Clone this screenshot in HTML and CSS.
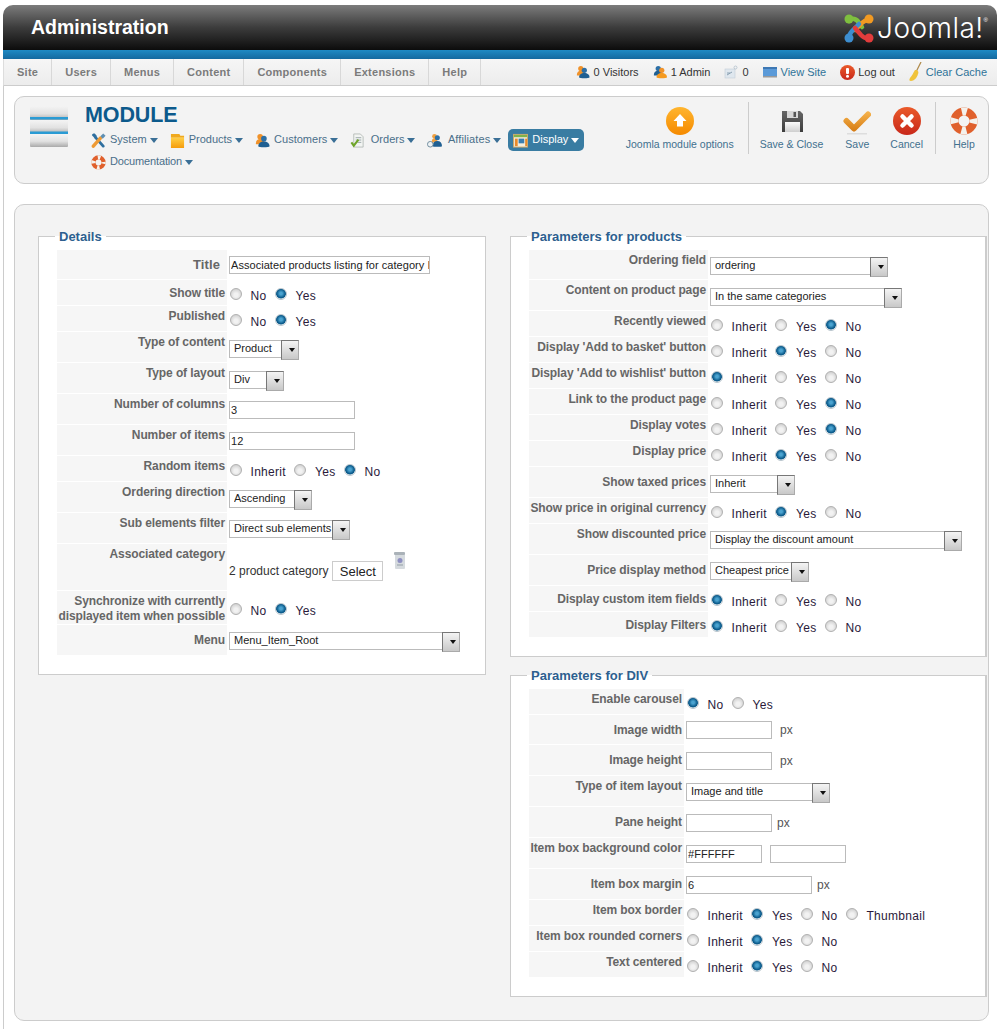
FILE: index.html
```html
<!DOCTYPE html>
<html lang="en">
<head>
<meta charset="utf-8">
<title>Administration</title>
<link rel="stylesheet" href="styles.css">
</head>
<body>
<svg class="sprite" xmlns="http://www.w3.org/2000/svg">
  <defs>
    <linearGradient id="gOrange" x1="0" y1="0" x2="0" y2="1"><stop offset="0" stop-color="#ffb52e"/><stop offset="1" stop-color="#f58a00"/></linearGradient>
    <linearGradient id="gRed" x1="0" y1="0" x2="0" y2="1"><stop offset="0" stop-color="#ea5a2a"/><stop offset="1" stop-color="#c8281a"/></linearGradient>
    <linearGradient id="gBar" x1="0" y1="0" x2="0" y2="1"><stop offset="0" stop-color="#f4f4f4"/><stop offset=".55" stop-color="#e2e2e2"/><stop offset="1" stop-color="#aaa"/></linearGradient>
    <linearGradient id="gCheck" gradientUnits="userSpaceOnUse" x1="0" y1="6" x2="0" y2="24"><stop offset="0" stop-color="#f4b04a"/><stop offset="1" stop-color="#d67c14"/></linearGradient>
    <linearGradient id="gDisk" x1="0" y1="0" x2="0" y2="1"><stop offset="0" stop-color="#666"/><stop offset="1" stop-color="#3c3c3c"/></linearGradient>
    <linearGradient id="gDiskLabel" x1="0" y1="0" x2="0" y2="1"><stop offset="0" stop-color="#fafafa"/><stop offset="1" stop-color="#cfcfcf"/></linearGradient>
    <linearGradient id="gFolder" x1="0" y1="0" x2="0" y2="1"><stop offset="0" stop-color="#ffcf45"/><stop offset="1" stop-color="#f59c0c"/></linearGradient>
    <symbol id="i-people-a" viewBox="0 0 16 16">
      <circle cx="5.500" cy="4" r="3" fill="#f0922a"/><path d="M1 11c0-3 2-4.500 4.500-4.500S10 8 10 11v1H1z" fill="#f0922a"/>
      <circle cx="9.500" cy="6" r="3" fill="#2c6fa6"/><path d="M3.500 14c0-3 2.500-5 6-5s6 2 6 5c0 1.500-12 1.500-12 0z" fill="#1f5f92"/>
    </symbol>
    <symbol id="i-people-b" viewBox="0 0 16 16">
      <circle cx="6" cy="4" r="3" fill="#2c6fa6"/><path d="M1 11c0-3 2-4.500 5-4.500s5 1.500 5 4.500v1H1z" fill="#1f5f92"/>
      <circle cx="10" cy="6" r="3" fill="#f0922a"/><path d="M4 14c0-3 2.500-5 6-5s6 2 6 5c0 1.500-12 1.500-12 0z" fill="#f59a20"/>
    </symbol>
    <symbol id="i-aff" viewBox="0 0 16 16">
      <circle cx="8" cy="3.500" r="2.500" fill="#f0a040"/><path d="M5 10c0-3 1-4.500 3-4.500s3 1.500 3 4.500z" fill="#f0a040"/>
      <circle cx="11" cy="5" r="2.700" fill="#2c6fa6"/><path d="M6 14c0-3.500 2-5.500 5-5.500s5 2 5 5.500c0 1-10 1-10 0z" fill="#1f5f92"/>
      <circle cx="3.500" cy="12" r="3" fill="#eef2f4" stroke="#6d8a9c"/>
    </symbol>
    <symbol id="i-tools" viewBox="0 0 16 16">
      <path d="M13 14 5 5" stroke="#2f6f9f" stroke-width="3" stroke-linecap="round"/>
      <path d="M1 2.500 4 5.500 6.500 3.500 4 .5C2 .5 1 1 1 2.500z" fill="#2f6f9f"/>
      <path d="M2.500 14 10 5.500" stroke="#ee9a34" stroke-width="3.600" stroke-linecap="round"/>
      <path d="M10 3.500 13 .5 15.500 3 12.500 6z" fill="#5f8fb2"/>
    </symbol>
    <symbol id="i-box" viewBox="0 0 16 16">
      <path d="M1 1h9l1 2h4v2H1z" fill="#f0a91e"/><rect x="1" y="5" width="14" height="11" fill="url(#gFolder)"/>
    </symbol>
    <symbol id="i-doc" viewBox="0 0 16 16">
      <path d="M4 1h7l3 3v11H4z" fill="#f2f4f2" stroke="#a9b0ac" stroke-width=".8"/>
      <path d="M6 5h6M6 7.500h6M8 10h4" stroke="#9aa5a9"/>
      <path d="M1.500 10 4 13.500 9 7" fill="none" stroke="#6fa52a" stroke-width="2.200"/>
    </symbol>
    <symbol id="i-display" viewBox="0 0 16 16">
      <rect x=".5" y="1.500" width="15" height="13.500" fill="#f4eedd" stroke="#cda86a"/>
      <rect x="1" y="2" width="14" height="2.500" fill="#7fb34a"/>
      <rect x="2" y="6" width="3" height="8" fill="#e88a2a"/>
      <rect x="6" y="6" width="6" height="5" fill="#3a7eb0"/>
      <rect x="13" y="6" width="2" height="8" fill="#e88a2a"/>
    </symbol>
    <symbol id="i-buoy" viewBox="0 0 28 28">
      <circle cx="14" cy="14" r="9.500" fill="none" stroke="#e0602c" stroke-width="8"/>
      <circle cx="14" cy="14" r="9.500" fill="none" stroke="#f4f1ec" stroke-width="8" stroke-dasharray="5 9.920" stroke-dashoffset="2.500"/>
    </symbol>
    <symbol id="i-msg" viewBox="0 0 14 14">
      <rect x="1" y="4" width="10" height="9" fill="#dfe7ee" stroke="#c3ced7" stroke-width=".6"/>
      <path d="M3 10 8 7M3 8h3" stroke="#8aa0b2"/>
      <circle cx="11.500" cy="2.500" r="1.500" fill="none" stroke="#a9b9c6" stroke-width=".7"/>
    </symbol>
    <symbol id="i-trash" viewBox="0 0 13 19">
      <rect x="2" y="3" width="10" height="15" rx="1" fill="#d5dade"/>
      <rect x="1" y="1" width="11" height="3" rx="1" fill="#aab2b8"/>
      <circle cx="7" cy="9.500" r="2.500" fill="#8d8fc0"/><path d="M4 14h6" stroke="#b4bcc2" stroke-width="2"/>
    </symbol>
  </defs>
</svg>

<div class="page">
  <header class="top">
    <h1 class="brand">Administration</h1>
    <div class="jlogo">
      <svg class="jmark" viewBox="0 0 30 30" width="30" height="30">
        <path d="M5 8c3-4 8-2 10 2l3 4" fill="none" stroke="#7fbf3f" stroke-width="4.500" stroke-linecap="round"/>
        <path d="M24 7c-4 0-6 3-9 6l-4 4" fill="none" stroke="#f29a22" stroke-width="4.500" stroke-linecap="round"/>
        <path d="M5 25c0-4 2-6 5-9l5-5" fill="none" stroke="#3d8ed0" stroke-width="4.500" stroke-linecap="round"/>
        <path d="M25 25c-3 1-5 0-8-3l-6-7" fill="none" stroke="#e23c3c" stroke-width="4.500" stroke-linecap="round"/>
        <circle cx="5" cy="6" r="4.500" fill="#7fbf3f"/><circle cx="25" cy="6" r="4.500" fill="#f29a22"/>
        <circle cx="5" cy="25" r="4.500" fill="#3d8ed0"/><circle cx="25" cy="25" r="4.500" fill="#e23c3c"/>
      </svg>
      <span class="jtext">Joomla!</span><span class="jreg">®</span>
    </div>
  </header>
  <div class="blue"></div>
  <nav class="tabs">
    <ul class="tablist">
      <li><a class="tab" href="#">Site</a></li>
      <li><a class="tab" href="#">Users</a></li>
      <li><a class="tab" href="#">Menus</a></li>
      <li><a class="tab" href="#">Content</a></li>
      <li><a class="tab" href="#">Components</a></li>
      <li><a class="tab" href="#">Extensions</a></li>
      <li><a class="tab" href="#">Help</a></li>
    </ul>
    <div class="status">
      <span class="st"><svg class="i14"><use href="#i-people-a"/></svg>0 Visitors</span>
      <span class="st"><svg class="i14"><use href="#i-people-b"/></svg>1 Admin</span>
      <span class="st"><svg class="i14"><use href="#i-msg"/></svg>0</span>
      <a class="st link" href="#"><svg class="i14" viewBox="0 0 14 14"><rect y="2" width="14" height="10" fill="#5b9ad8"/><rect y="2" width="14" height="2" fill="#3e78b4"/><rect y="11" width="14" height="1.500" fill="#9a9a9a"/></svg>View Site</a>
      <a class="st dark" href="#"><svg class="i15" viewBox="0 0 15 15"><circle cx="7.500" cy="7.500" r="7.500" fill="url(#gRed)"/><rect x="6" y="3" width="3" height="6" rx="1" fill="#fff"/><circle cx="7.500" cy="11.200" r="1.500" fill="#fff"/></svg>Log out</a>
      <a class="st link" href="#"><svg class="broom" viewBox="0 0 13 20"><path d="M12 0 7 10" stroke="#b08a4a" stroke-width="1.200"/><path d="M6 8c3 0 4 2 3 4-1 4-4 7-7 7-2 0-2-1-1-3 2-2 3-5 5-8z" fill="#f0c33a"/></svg>Clear Cache</a>
    </div>
  </nav>

  <main class="main">
    <section class="panel toolbar">
      <svg class="modicon" viewBox="0 0 38 42" width="38" height="42">
        <rect y="1" width="38" height="14" rx="1" fill="url(#gBar)"/>
        <rect y="15" width="38" height="14" rx="1" fill="url(#gBar)"/>
        <rect y="29" width="38" height="13" rx="1" fill="url(#gBar)"/>
        <rect y="12" width="38" height="2.500" fill="#2a9bd4"/>
        <rect y="26.500" width="38" height="2.500" fill="#2a9bd4"/>
      </svg>
      <div class="heading">
        <h2 class="modtitle">MODULE</h2>
        <ul class="modnav">
          <li class="mi"><svg class="i15"><use href="#i-tools"/></svg><span>System</span><i class="caret"></i></li>
          <li class="mi"><svg class="i15"><use href="#i-box"/></svg><span>Products</span><i class="caret"></i></li>
          <li class="mi"><svg class="i15"><use href="#i-people-a"/></svg><span>Customers</span><i class="caret"></i></li>
          <li class="mi wide"><svg class="i15"><use href="#i-doc"/></svg><span>Orders</span><i class="caret"></i></li>
          <li class="mi wide"><svg class="i15"><use href="#i-aff"/></svg><span class="spread">Affiliates</span><i class="caret"></i></li>
          <li class="mi active"><svg class="i15"><use href="#i-display"/></svg><span>Display</span><i class="caret"></i></li>
          <li class="mi"><svg class="i15"><use href="#i-buoy"/></svg><span class="tight">Documentation</span><i class="caret"></i></li>
        </ul>
      </div>
      <div class="tools">
        <div class="tgroup g1">
          <a class="tool" href="#"><svg class="i28" viewBox="0 0 28 28"><circle cx="14" cy="14" r="14" fill="url(#gOrange)"/><path d="M14 7 20.500 14H17v5.500h-6V14H7.500z" fill="#fff"/></svg>Joomla module options</a>
        </div>
        <div class="tgroup g2">
          <a class="tool mr1" href="#"><svg class="i28" viewBox="0 0 28 28"><path d="M4 4h18l3 3v18H4z" fill="url(#gDisk)"/><rect x="9" y="4" width="11" height="7" fill="#d6d6d6"/><rect x="15.500" y="5" width="2.500" height="5" fill="#555"/><rect x="7" y="15" width="15" height="10" fill="url(#gDiskLabel)"/></svg>Save &amp; Close</a>
          <a class="tool" href="#"><svg class="i28" viewBox="0 0 28 28"><path d="M3.500 14 11 21.500 25 7.500" fill="none" stroke="url(#gCheck)" stroke-width="6" stroke-linecap="round" stroke-linejoin="round"/><rect x="4" y="26" width="20" height="1.500" fill="#ddd"/></svg>Save</a>
          <a class="tool" href="#"><svg class="i28" viewBox="0 0 28 28"><circle cx="14" cy="14" r="14" fill="url(#gRed)"/><path d="M9.500 9.500 18.500 18.500M18.500 9.500 9.500 18.500" stroke="#fff" stroke-width="4.500" stroke-linecap="round"/></svg>Cancel</a>
        </div>
        <div class="tgroup g3">
          <a class="tool" href="#"><svg class="i28"><use href="#i-buoy"/></svg>Help</a>
        </div>
      </div>
    </section>

    <section class="panel content">
      <fieldset class="fs">
        <legend>Details</legend>
        <div class="rows c170">
          <div class="row h29 mid"><label class="lbl big">Title</label><div class="fld t6"><input class="txt w201" type="text" value="Associated products listing for category ID"></div></div>
          <div class="row h25 mid"><label class="lbl">Show title</label><div class="fld rad"><label class="opt"><input type="radio" name="a1">No</label><label class="opt"><input type="radio" name="a1" checked>Yes</label></div></div>
          <div class="row h25"><label class="lbl">Published</label><div class="fld rad"><label class="opt"><input type="radio" name="a2">No</label><label class="opt"><input type="radio" name="a2" checked>Yes</label></div></div>
          <div class="row h30"><label class="lbl">Type of content</label><div class="fld t8"><span class="sel w70"><select><option>Product</option></select></span></div></div>
          <div class="row h30"><label class="lbl">Type of layout</label><div class="fld t8"><span class="sel w55"><select><option>Div</option></select></span></div></div>
          <div class="row h30"><label class="lbl">Number of columns</label><div class="fld"><input class="txt w126" type="text" value="3"></div></div>
          <div class="row h30"><label class="lbl">Number of items</label><div class="fld"><input class="txt w126" type="text" value="12"></div></div>
          <div class="row h25"><label class="lbl">Random items</label><div class="fld rad"><label class="opt"><input type="radio" name="a3">Inherit</label><label class="opt"><input type="radio" name="a3">Yes</label><label class="opt"><input type="radio" name="a3" checked>No</label></div></div>
          <div class="row h30"><label class="lbl">Ordering direction</label><div class="fld t8"><span class="sel w83"><select><option>Ascending</option></select></span></div></div>
          <div class="row h30"><label class="lbl">Sub elements filter</label><div class="fld"><span class="sel w121"><select><option>Direct sub elements</option></select></span></div></div>
          <div class="row h46"><label class="lbl">Associated category</label>
            <div class="fld assoc"><span class="assoc-text">2 product category</span><button class="btn" type="button">Select</button><svg class="trash"><use href="#i-trash"/></svg></div></div>
          <div class="row h33 mid"><label class="lbl">Synchronize with currently<br>displayed item when possible</label><div class="fld rad t13"><label class="opt"><input type="radio" name="a4">No</label><label class="opt"><input type="radio" name="a4" checked>Yes</label></div></div>
          <div class="row h30 mid"><label class="lbl">Menu</label><div class="fld"><span class="sel w231"><select><option>Menu_Item_Root</option></select></span></div></div>
        </div>
      </fieldset>

      <div class="rightcol">
        <fieldset class="fs">
          <legend>Parameters for products</legend>
          <div class="rows c179">
            <div class="row h29"><label class="lbl">Ordering field</label><div class="fld"><span class="sel w178"><select><option>ordering</option></select></span></div></div>
            <div class="row h30"><label class="lbl">Content on product page</label><div class="fld t8"><span class="sel w192"><select><option>In the same categories</option></select></span></div></div>
            <div class="row h25"><label class="lbl">Recently viewed</label><div class="fld rad"><label class="opt"><input type="radio" name="b1">Inherit</label><label class="opt"><input type="radio" name="b1">Yes</label><label class="opt"><input type="radio" name="b1" checked>No</label></div></div>
            <div class="row h25"><label class="lbl">Display 'Add to basket' button</label><div class="fld rad"><label class="opt"><input type="radio" name="b2">Inherit</label><label class="opt"><input type="radio" name="b2" checked>Yes</label><label class="opt"><input type="radio" name="b2">No</label></div></div>
            <div class="row h25"><label class="lbl">Display 'Add to wishlist' button</label><div class="fld rad"><label class="opt"><input type="radio" name="b3" checked>Inherit</label><label class="opt"><input type="radio" name="b3">Yes</label><label class="opt"><input type="radio" name="b3">No</label></div></div>
            <div class="row h25"><label class="lbl">Link to the product page</label><div class="fld rad"><label class="opt"><input type="radio" name="b4">Inherit</label><label class="opt"><input type="radio" name="b4">Yes</label><label class="opt"><input type="radio" name="b4" checked>No</label></div></div>
            <div class="row h25"><label class="lbl">Display votes</label><div class="fld rad"><label class="opt"><input type="radio" name="b5">Inherit</label><label class="opt"><input type="radio" name="b5">Yes</label><label class="opt"><input type="radio" name="b5" checked>No</label></div></div>
            <div class="row h25"><label class="lbl">Display price</label><div class="fld rad"><label class="opt"><input type="radio" name="b6">Inherit</label><label class="opt"><input type="radio" name="b6" checked>Yes</label><label class="opt"><input type="radio" name="b6">No</label></div></div>
            <div class="row h30 mid"><label class="lbl">Show taxed prices</label><div class="fld t8"><span class="sel w85"><select><option>Inherit</option></select></span></div></div>
            <div class="row h25"><label class="lbl">Show price in original currency</label><div class="fld rad"><label class="opt"><input type="radio" name="b7">Inherit</label><label class="opt"><input type="radio" name="b7" checked>Yes</label><label class="opt"><input type="radio" name="b7">No</label></div></div>
            <div class="row h30"><label class="lbl">Show discounted price</label><div class="fld"><span class="sel w252"><select><option>Display the discount amount</option></select></span></div></div>
            <div class="row h30 mid"><label class="lbl">Price display method</label><div class="fld"><span class="sel w99"><select><option>Cheapest price</option></select></span></div></div>
            <div class="row h25 mid"><label class="lbl">Display custom item fields</label><div class="fld rad"><label class="opt"><input type="radio" name="b8" checked>Inherit</label><label class="opt"><input type="radio" name="b8">Yes</label><label class="opt"><input type="radio" name="b8">No</label></div></div>
            <div class="row h25 mid"><label class="lbl">Display Filters</label><div class="fld rad"><label class="opt"><input type="radio" name="b9" checked>Inherit</label><label class="opt"><input type="radio" name="b9">Yes</label><label class="opt"><input type="radio" name="b9">No</label></div></div>
          </div>
        </fieldset>

        <fieldset class="fs">
          <legend>Parameters for DIV</legend>
          <div class="rows c155">
            <div class="row h25"><label class="lbl">Enable carousel</label><div class="fld rad"><label class="opt"><input type="radio" name="c1" checked>No</label><label class="opt"><input type="radio" name="c1">Yes</label></div></div>
            <div class="row h29 mid"><label class="lbl">Image width</label><div class="fld t6 fx"><input class="txt w86" type="text"><span class="unit u8">px</span></div></div>
            <div class="row h30 mid"><label class="lbl">Image height</label><div class="fld fx"><input class="txt w86" type="text"><span class="unit u8">px</span></div></div>
            <div class="row h30"><label class="lbl">Type of item layout</label><div class="fld"><span class="sel w144"><select><option>Image and title</option></select></span></div></div>
            <div class="row h30 mid"><label class="lbl">Pane height</label><div class="fld fx"><input class="txt w86" type="text"><span class="unit u5">px</span></div></div>
            <div class="row h30"><label class="lbl">Item box background color</label><div class="fld fx"><input class="txt w76" type="text" value="#FFFFFF"><input class="txt w76 ml8" type="text"></div></div>
            <div class="row h30 mid"><label class="lbl">Item box margin</label><div class="fld fx"><input class="txt w126" type="text" value="6"><span class="unit u5">px</span></div></div>
            <div class="row h25"><label class="lbl">Item box border</label><div class="fld rad"><label class="opt"><input type="radio" name="c2">Inherit</label><label class="opt"><input type="radio" name="c2" checked>Yes</label><label class="opt"><input type="radio" name="c2">No</label><label class="opt"><input type="radio" name="c2">Thumbnail</label></div></div>
            <div class="row h25"><label class="lbl">Item box rounded corners</label><div class="fld rad"><label class="opt"><input type="radio" name="c3">Inherit</label><label class="opt"><input type="radio" name="c3" checked>Yes</label><label class="opt"><input type="radio" name="c3">No</label></div></div>
            <div class="row h25"><label class="lbl">Text centered</label><div class="fld rad"><label class="opt"><input type="radio" name="c4">Inherit</label><label class="opt"><input type="radio" name="c4" checked>Yes</label><label class="opt"><input type="radio" name="c4">No</label></div></div>
          </div>
        </fieldset>
      </div>
    </section>
  </main>
</div>
</body>
</html>
```

FILE: styles.css
```css
* { box-sizing: border-box; }
html, body { margin: 0; padding: 0; background: #fff; }
body { font-family: "Liberation Sans", Arial, sans-serif; font-size: 12px; color: #222; overflow: hidden; }
a { text-decoration: none; color: inherit; }
ul { list-style: none; margin: 0; padding: 0; }
.sprite { position: absolute; width: 0; height: 0; }

.page { width: 994px; margin: 5px 0 0 3px; }

.top { height: 45px; display: flex; justify-content: space-between; align-items: center; border-radius: 10px 10px 0 0;
  background: linear-gradient(#7c7c7c, #3c3c3c 50%, #0c0c0c); padding: 0 9px 0 28px; }
.brand { margin: 0; font-size: 19.5px; font-weight: bold; color: #fff; line-height: 45px; height: 45px; }
.jlogo { display: flex; align-items: center; color: #fff; height: 45px; }
.jmark { margin: 0 3px 0 0; }
.jtext { font-family: Inter, "Liberation Sans", sans-serif; font-weight: 300; font-size: 28px; letter-spacing: .45px; line-height: 30px; }
.jreg { font-size: 6px; align-self: flex-start; margin: 12px 0 0 0; }

.blue { height: 9px; background: linear-gradient(#1f8ac4, #14699f); }

.tabs { height: 27px; display: flex; justify-content: space-between; background: linear-gradient(#f6f6f6, #ececec); border-bottom: 1px solid #ccc; border-left: 1px solid #ddd; }
.tablist { display: flex; }
.tablist li { border-right: 1px solid #d8d8d8; }
.tab { display: block; padding: 0 13px; line-height: 26px; font-size: 11px; font-weight: bold; letter-spacing: .25px; color: #7b7b7b; }
.status { display: flex; align-items: center; padding-right: 10px; font-size: 11px; color: #333; }
.st { display: flex; align-items: center; gap: 4px; margin-left: 14px; white-space: nowrap; }
.link { color: #2f7398; }
.dark { color: #333; gap: 3px; }
.i14 { width: 14px; height: 14px; }
.i15 { width: 15px; height: 15px; flex: none; }
.i28 { width: 28px; height: 28px; }
.broom { width: 13px; height: 20px; }

.main { border-left: 1px solid #ccc; padding: 10px 0 8px 10px; }
.panel { width: 975px; border: 1px solid #ccc; border-radius: 10px; background: #f3f3f3; }

.toolbar { height: 88px; display: flex; padding: 7px 0 0 15px; margin-bottom: 20px; }
.modicon { margin: 1px 17px 0 0; flex: none; }
.heading { width: 520px; flex: none; }
.modtitle { margin: 0; font-size: 21.5px; line-height: 23px; font-weight: bold; color: #0c5a8c; letter-spacing: -.1px; }
.modnav { display: flex; flex-wrap: wrap; gap: 0 2px; margin: 2px 0 0 1px; width: 510px; }
.mi { height: 22px; display: flex; align-items: center; padding: 0 5px; font-size: 11px; color: #4a6f8a; }
.mi span { margin: -2px 0 0 4px; }
.mi.wide span { margin-left: 5.5px; }
.spread { letter-spacing: .1px; }
.tight { letter-spacing: -.15px; }
.caret { width: 0; height: 0; margin-left: 3px; border: 4px solid transparent; border-top: 5px solid #3a6f96; border-bottom: 0; }
.active { background: #397ca2; color: #fff; border-radius: 5px; }
.active .caret { border-top-color: #fff; }

.tools { display: flex; height: 52px; margin: -2px 0 0 auto; padding-right: 10px; font-size: 10.5px; color: #41708e; }
.tgroup { display: flex; }
.g1 { padding-right: 14px; }
.g2 { border-left: 1px solid #ccc; gap: 19px; padding: 0 12px 0 11px; }
.g3 { border-left: 1px solid #ccc; padding-left: 14px; }
.tool { display: flex; flex-direction: column; align-items: center; gap: 2px; padding-top: 5px; line-height: 15px; white-space: nowrap; }
.mr1 { margin-right: 1px; }

.content { display: grid; grid-template-columns: 448px 477px; column-gap: 24px; padding: 24px 0 23px 23px; align-items: start; }
.rightcol { display: flex; flex-direction: column; gap: 11px; }
.fs { margin: 0; min-width: 0; background: #fff; border: 1px solid #ccc; padding: 6px 0 19px 18px; }
.rightcol .fs { border-right-width: 2px; }
.fs legend { margin-left: -2px; padding: 0 4px; font-size: 13px; font-weight: bold; line-height: 15px; color: #2d5f8f; }

.rows { display: flex; flex-direction: column; gap: 1px; }
.row { display: flex; }
.h25 { height: 25px; } .h29 { height: 29px; } .h30 { height: 30px; } .h33 { height: 33px; } .h46 { height: 46px; }
.lbl { flex: none; background: #f6f6f6; text-align: right; font-weight: bold; letter-spacing: -.1px; color: #666; line-height: 15px; padding: 3px 2px 0 0; white-space: nowrap; }
.mid .lbl { display: block; padding-top: 1px; align-self: stretch; }
.h25.mid .lbl { line-height: 24px; }
.h29.mid .lbl { line-height: 28px; }
.h30.mid .lbl { line-height: 29px; }
.h33.mid .lbl { line-height: 15px; padding-top: 3px; }
.c170 .lbl { width: 170px; } .c179 .lbl { width: 179px; } .c155 .lbl { width: 155px; }
.big { font-size: 13px; letter-spacing: .1px; }
.row .big { padding-right: 7px; }
.fld { padding: 7px 0 0 2px; }
.t6 { padding-top: 6px; } .t8 { padding-top: 8px; }
.fx { display: flex; align-items: flex-start; }
.rad { display: flex; align-items: flex-start; padding: 9px 0 0 3px; }
.t13 { padding-top: 13px; }
.opt { display: flex; align-items: center; gap: 8.5px; margin-right: 8.5px; line-height: 15px; letter-spacing: .3px; color: #2a1a3a; white-space: nowrap; }
.opt input { appearance: none; margin: -5px 0 0; width: 12px; height: 12px; border-radius: 50%; border: 1px solid #b0b0b0;
  background: radial-gradient(circle at 50% 60%, #f2f2f2 0 25%, #cfcfcf 80%); }
.opt input:checked { border-color: #b8c4cc; background: radial-gradient(circle at 50% 45%, #4aa3d0 0 18%, #0d5c8c 55%, #0d5c8c 62%, #e8eef2 72%); }

.txt { display: block; height: 18px; border: 1px solid #bbb; background: #fff; padding: 0 0 0 1px; font: 11px "Liberation Sans", Arial, sans-serif; letter-spacing: .05px; color: #222; }
.w201 { width: 201px; } .w126 { width: 126px; } .w86 { width: 86px; } .w76 { width: 76px; }
.ml8 { margin-left: 8px; }
.unit { line-height: 18px; color: #555; }
.u8 { margin-left: 8px; } .u5 { margin-left: 5px; }

.sel { display: block; position: relative; height: 18px; }
.sel select { appearance: none; display: block; width: 100%; height: 18px; border: 1px solid #bbb; border-radius: 0; background: #fff; padding: 0 16px 2px 4px; font: 11px "Liberation Sans", Arial, sans-serif; color: #222; }
.sel::before { content: ""; position: absolute; top: 0; right: 0; width: 16px; height: 18px; border: 1px solid #777; border-right-color: #aaa; border-bottom-color: #aaa; background: linear-gradient(#f4f4f4, #c8c8c8); }
.sel::after { content: ""; position: absolute; top: 8px; right: 4px; border: 3.5px solid transparent; border-top: 4px solid #111; border-bottom: 0; }
.w55 { width: 55px; } .w70 { width: 70px; } .w83 { width: 83px; } .w85 { width: 85px; } .w99 { width: 99px; } .w121 { width: 121px; }
.w144 { width: 144px; } .w178 { width: 178px; } .w192 { width: 192px; } .w231 { width: 231px; } .w252 { width: 252px; }

.assoc { display: flex; align-items: flex-start; }
.assoc-text { margin-top: 13px; line-height: 15px; color: #333; white-space: nowrap; }
.btn { margin: 10px 0 0 4px; width: 51px; height: 20px; padding: 0; border: 1px solid #ccc; background: #fff; font: 13px "Liberation Sans", Arial, sans-serif; color: #222; }
.trash { width: 13px; height: 19px; margin-left: 10px; }
```
